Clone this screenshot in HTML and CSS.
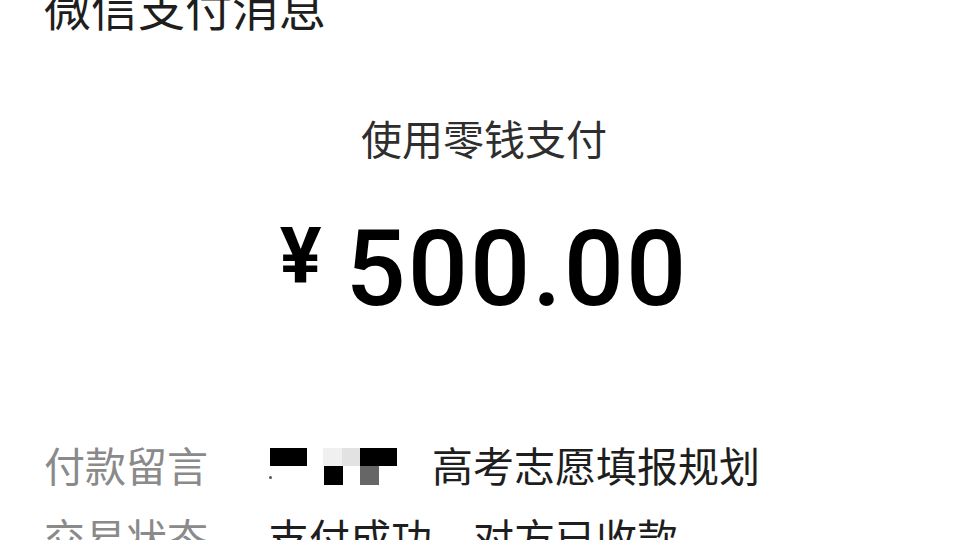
FILE: index.html
```html
<!DOCTYPE html>
<html lang="zh-CN">
<head>
<meta charset="utf-8">
<link rel="stylesheet" href="styles.css">
</head>
<body>
<div class="page">
  <div class="title">微信支付消息</div>
  <div class="sub">使用零钱支付</div>
  <div class="amount"><span class="yen">¥</span><span class="num">500.00</span></div>
  <div class="rows">
    <div class="row">
      <div class="label">付款留言</div>
      <div class="value">
        <span class="mosaic">
          <i class="m m1"></i><i class="m m2"></i><i class="m m3"></i><i class="m m4"></i><i class="m m5"></i><i class="m m6"></i><i class="m m7"></i>
        </span>
        <span class="text">高考志愿填报规划</span>
      </div>
    </div>
    <div class="row">
      <div class="label">交易状态</div>
      <div class="value"><span class="text">支付成功，对方已收款</span></div>
    </div>
  </div>
</div>
</body>
</html>
```
FILE: styles.css
```css
html, body {
  margin: 0;
  padding: 0;
  background: #ffffff;
  overflow: hidden;
}
body {
  width: 960px;
  height: 540px;
  font-family: "Noto Sans CJK SC", "Noto Sans", sans-serif;
}
.page {
  padding: 0 0 0 44px;
}
.title {
  font-size: 47px;
  line-height: 47px;
  margin-top: -18px;
  color: #1e1e1e;
}
.sub {
  margin: 88px 0 0 -44px;
  padding-left: 8px;
  text-align: center;
  font-size: 41px;
  line-height: 41px;
  color: #2e2e2e;
}
.amount {
  margin: 58px 0 0 -44px;
  padding-left: 8px;
  display: flex;
  justify-content: center;
  align-items: baseline;
  font-family: Roboto, "DejaVu Sans", sans-serif;
  color: #000;
  line-height: 1;
}
.yen {
  font-size: 78px;
  font-weight: 700;
  margin-right: 24px;
  position: relative;
  top: -22px;
}
.num {
  font-size: 106px;
  font-weight: 500;
  letter-spacing: 2px;
}
.rows {
  margin-top: 122px;
  display: flex;
  flex-direction: column;
  gap: 31px;
}
.row {
  display: flex;
  align-items: center;
  font-size: 41px;
  line-height: 41px;
}
.label {
  width: 224px;
  color: #8a8a8a;
}
.value {
  display: flex;
  align-items: center;
  color: #1e1e1e;
}
.mosaic {
  position: relative;
  display: block;
  width: 132px;
  height: 41px;
  margin-right: 32px;
}
.m {
  position: absolute;
  display: block;
}
.m1 { left: 2px; top: 4px; width: 37px; height: 18px; background: #000; }
.m2 { left: 1px; top: 32px; width: 3px; height: 3px; background: #555; border-radius: 50%; }
.m3 { left: 55px; top: 4px; width: 19px; height: 18px; background: #f0f0f0; }
.m4 { left: 74px; top: 4px; width: 18px; height: 18px; background: #e2e2e2; }
.m5 { left: 56px; top: 22px; width: 19px; height: 19px; background: #000; }
.m6 { left: 92px; top: 4px; width: 37px; height: 18px; background: #000; }
.m7 { left: 92px; top: 22px; width: 19px; height: 19px; background: #666; }
```
